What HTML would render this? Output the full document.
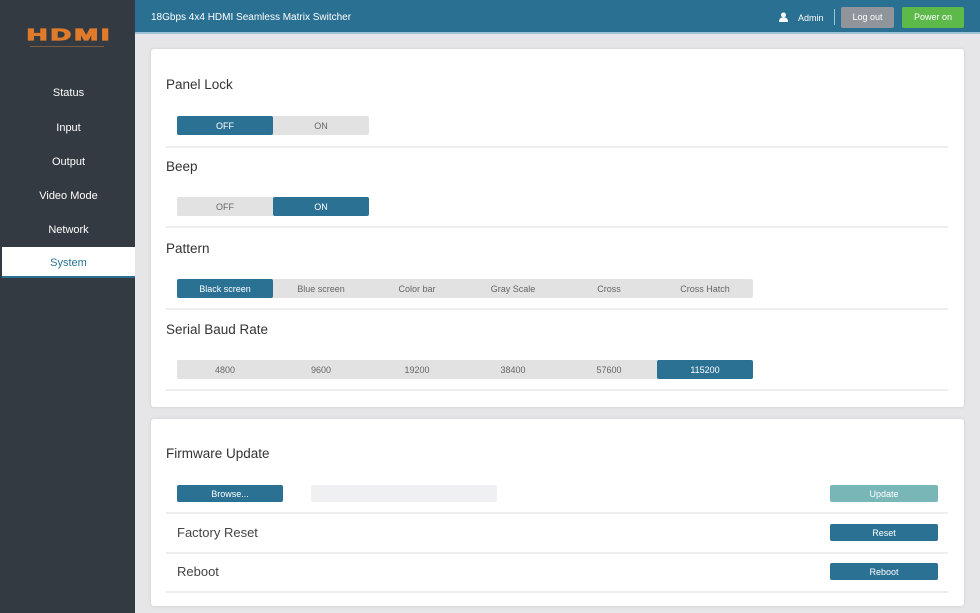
<!DOCTYPE html><html><head><style>
*{margin:0;padding:0;box-sizing:border-box}
body{width:980px;height:613px;background:#e6e6e8;font-family:"Liberation Sans",sans-serif;position:relative;overflow:hidden}
.side{position:absolute;left:0;top:0;width:135px;height:613px;background:#343a41}
.nav{position:absolute;left:2px;width:133px;text-align:center;color:#fff;font-size:11px}
.sel{background:#fff;color:#2b7194;height:31px;line-height:33px;border-bottom:2px solid #2b7194}
.hdr{position:absolute;left:135px;top:0;width:845px;height:34px;background:#2a7093;border-bottom:2px solid #9fc3d6}
.card{position:absolute;left:151px;width:813px;background:#fff;border-radius:3px;box-shadow:0 0 3px #ccc}
.h{position:absolute;left:15px;font-size:13.5px;color:#333}
.sep{position:absolute;left:15px;width:782px;height:2px;background:#eee}
.grp{position:absolute;left:26px;display:flex;height:19px;background:#e2e2e2;border-radius:2px}
.grp div{width:96px;text-align:center;font-size:9px;line-height:20px;color:#666}
.grp .on{background:#2b7194;color:#fff;border-radius:2px}
.btn{position:absolute;height:17px;font-size:9px;line-height:18px;text-align:center;color:#fff;background:#2b7194;border-radius:2px}
.l{position:absolute;left:26px;font-size:13px;color:#444}
</style></head><body>
<div class="side">
<div style="position:absolute;left:27px;top:29px;color:#e07b2a;font:900 16px/14px 'Liberation Sans';-webkit-text-stroke:1.2px #e07b2a;letter-spacing:2px;transform:scaleX(1.75);transform-origin:left">HDMI</div>
<div style="position:absolute;left:30px;top:46px;width:74px;height:1px;background:#7a5c40"></div>
<div class="nav" style="top:87px">Status</div>
<div class="nav" style="top:122px">Input</div>
<div class="nav" style="top:156px">Output</div>
<div class="nav" style="top:190px">Video Mode</div>
<div class="nav" style="top:224px">Network</div>
<div class="nav sel" style="top:247px">System</div>
</div>
<div class="hdr">
<div style="position:absolute;left:16px;top:12px;color:#fff;font-size:10px">18Gbps 4x4 HDMI Seamless Matrix Switcher</div>
<svg style="position:absolute;left:644px;top:12px" width="9" height="10"><circle cx="4.5" cy="3" r="2.5" fill="#fff"/><path d="M0 10 Q0 5 4.5 5.5 Q9 5 9 10Z" fill="#fff"/></svg>
<div style="position:absolute;left:663px;top:13px;color:#fff;font-size:9px">Admin</div>
<div style="position:absolute;left:699px;top:9px;width:1px;height:16px;background:#9fc3d6"></div>
<div style="position:absolute;left:706px;top:7px;width:53px;height:21px;background:#8f959b;color:#fff;font-size:9px;line-height:21px;text-align:center;border-radius:2px">Log out</div>
<div style="position:absolute;left:767px;top:7px;width:62px;height:21px;background:#5cb94a;color:#fff;font-size:9px;line-height:21px;text-align:center;border-radius:2px">Power on</div>
</div>
<div class="card" style="top:49px;height:358px">
<div class="h" style="top:28px">Panel Lock</div>
<div class="grp" style="top:67px"><div class="on">OFF</div><div>ON</div></div>
<div class="sep" style="top:97px"></div>
<div class="h" style="top:110px">Beep</div>
<div class="grp" style="top:148px"><div>OFF</div><div class="on">ON</div></div>
<div class="sep" style="top:177px"></div>
<div class="h" style="top:192px">Pattern</div>
<div class="grp" style="top:230px"><div class="on">Black screen</div><div>Blue screen</div><div>Color bar</div><div>Gray Scale</div><div>Cross</div><div>Cross Hatch</div></div>
<div class="sep" style="top:259px"></div>
<div class="h" style="top:273px">Serial Baud Rate</div>
<div class="grp" style="top:311px"><div>4800</div><div>9600</div><div>19200</div><div>38400</div><div>57600</div><div class="on">115200</div></div>
<div class="sep" style="top:340px"></div>
</div>
<div class="card" style="top:419px;height:187px">
<div class="h" style="top:27px">Firmware Update</div>
<div class="btn" style="left:26px;top:66px;width:106px">Browse...</div>
<div style="position:absolute;left:160px;top:66px;width:186px;height:17px;background:#eef0f2;border-radius:2px"></div>
<div class="btn" style="left:679px;top:66px;width:108px;background:#78b6b8">Update</div>
<div class="sep" style="top:93px"></div>
<div class="l" style="top:106px">Factory Reset</div>
<div class="btn" style="left:679px;top:105px;width:108px">Reset</div>
<div class="sep" style="top:133px"></div>
<div class="l" style="top:145px">Reboot</div>
<div class="btn" style="left:679px;top:144px;width:108px">Reboot</div>
<div class="sep" style="top:172px"></div>
</div>
</body></html>
